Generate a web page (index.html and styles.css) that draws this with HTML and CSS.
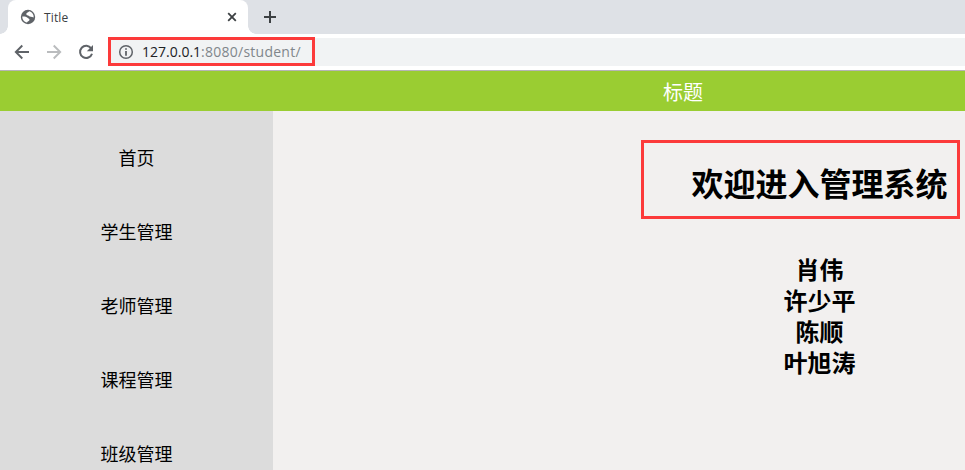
FILE: index.html
```html
<!DOCTYPE html>
<html lang="zh">
<head>
  <meta charset="UTF-8">
  <title>Title</title>
  <link rel="stylesheet" href="styles.css">
</head>
<body>
  <div class="tabs">
    <div class="tab">
      <svg width="16" height="16" viewBox="0 0 16 16">
        <circle cx="8" cy="8" r="7.2" fill="#5f6368"/>
        <path d="M9.2 2.3C8.4 3.6 6.6 3.6 6.3 4.8C6 6.4 8.2 6.2 9 7.1C9.6 8.3 11.6 7.6 13.7 8.4C13.9 5.4 12 3 9.2 2.3Z" fill="#fff"/>
        <path d="M2.3 7.6C4 7.4 6.6 7.7 7.5 8.8C8.2 9.8 9.8 9.6 9.5 11C9.1 12.2 7.4 12 7 13.6C4.2 13.2 2.2 10.6 2.3 7.6Z" fill="#fff"/>
      </svg>
      <span class="tab-title">Title</span>
      <svg width="10" height="10" viewBox="0 0 10 10"><path d="M1.2 1.2L8.8 8.8M8.8 1.2L1.2 8.8" stroke="#3c4043" stroke-width="1.8"/></svg>
    </div>
    <svg class="plus" width="14" height="14" viewBox="0 0 14 14"><path d="M7 1V13M1 7H13" stroke="#3c4043" stroke-width="2"/></svg>
  </div>
  <div class="toolbar">
    <svg width="16" height="16" viewBox="0 0 16 16" fill="none" stroke="#5f6368" stroke-width="1.9"><path d="M15 8H2.5M8.3 1.5L1.8 8L8.3 14.5"/></svg>
    <svg width="16" height="16" viewBox="0 0 16 16" fill="none" stroke="#babcbe" stroke-width="1.9"><path d="M1 8H13.5M7.7 1.5L14.2 8L7.7 14.5"/></svg>
    <svg width="16" height="16" viewBox="0 0 16 16"><path d="M13.2 4.4A6.1 6.1 0 1 0 14 9.7" fill="none" stroke="#5f6368" stroke-width="2"/><path d="M15 1V7.2H8.8Z" fill="#5f6368"/></svg>
    <div class="address">
      <svg width="16" height="16" viewBox="0 0 16 16"><circle cx="8" cy="8" r="6.3" fill="none" stroke="#5f6368" stroke-width="1.5"/><path d="M8 4.2V5.8M8 7.1V11.8" stroke="#5f6368" stroke-width="1.8"/></svg>
      <span class="url"><span class="host">127.0.0.1</span>:8080/student/</span>
      <div class="mark mark-url"></div>
    </div>
  </div>
  <div class="view">
    <div class="page">
      <div class="header">标题</div>
      <div class="main">
        <div class="menu">
          <div class="item">首页</div>
          <div class="item">学生管理</div>
          <div class="item">老师管理</div>
          <div class="item">课程管理</div>
          <div class="item">班级管理</div>
        </div>
        <div class="content">
          <h1>欢迎进入管理系统</h1>
          <h2>肖伟<br>许少平<br>陈顺<br>叶旭涛</h2>
          <div class="mark mark-welcome"></div>
        </div>
      </div>
    </div>
  </div>
</body>
</html>
```

FILE: styles.css
```css
* {
  box-sizing: border-box;
}
body {
  margin: 0;
  height: 470px;
  overflow: hidden;
  font-family: "Noto Sans CJK SC", sans-serif;
  color: #000;
}
svg {
  display: block;
  flex: none;
}
.tabs {
  display: flex;
  align-items: center;
  height: 34px;
  padding-left: 8px;
  background: #dee1e6;
}
.tab {
  position: relative;
  display: flex;
  align-items: center;
  width: 240px;
  height: 34px;
  padding: 0 11px 0 12px;
  background: #fff;
  border-radius: 8px 8px 0 0;
}
/* curved feet of the tab */
.tab::before,
.tab::after {
  content: "";
  position: absolute;
  bottom: 0;
  width: 8px;
  height: 8px;
}
.tab::before {
  left: -8px;
  background: radial-gradient(circle at 0 0, #dee1e6 7.5px, #fff 8px);
}
.tab::after {
  right: -8px;
  background: radial-gradient(circle at 100% 0, #dee1e6 7.5px, #fff 8px);
}
.tab-title {
  flex: 1;
  margin-left: 8px;
  font: 12px "Open Sans", sans-serif;
  letter-spacing: 0.15px;
  color: #3c4043;
}
.plus {
  margin-left: 15px;
}
.toolbar {
  display: flex;
  align-items: center;
  gap: 16px;
  height: 37px;
  padding-left: 14px;
  background: #fff;
  border-bottom: 1px solid #b6b4b6;
}
.address {
  position: relative;
  display: flex;
  align-items: center;
  flex: 1;
  height: 28px;
  margin-left: -2px;
  padding-left: 10px;
  background: #f1f3f4;
  border-radius: 4px 0 0 4px;
}
.url {
  margin-left: 8px;
  font: 14px/28px "Open Sans", sans-serif;
  letter-spacing: 0.25px;
  color: #80868b;
  white-space: nowrap;
}
.host {
  letter-spacing: 0;
  color: #202124;
}
.mark {
  position: absolute;
  border: 3px solid #fc3a3a;
}
.mark-url {
  left: 0;
  top: -1px;
  width: 207px;
  height: 29px;
}
.view {
  overflow: hidden;
}
/* full page width, cut off by the window */
.page {
  width: 1366px;
}
.header {
  height: 40px;
  line-height: 42px;
  background: #9acd32;
  color: #fff;
  font-size: 20px;
  text-align: center;
}
.main {
  display: flex;
  height: 359px;
}
.menu {
  width: 273px;
  padding-top: 9px;
  background: #dcdcdc;
  overflow: hidden;
}
.item {
  height: 74px;
  line-height: 74px;
  font-size: 18px;
  text-align: center;
}
.content {
  position: relative;
  flex: 1;
  background: #f2f0ef;
  text-align: center;
}
h1 {
  margin: 0;
  padding-top: 50px;
  font-size: 32px;
  line-height: 42px;
}
h2 {
  margin: 50px 0 0;
  font-size: 24px;
  line-height: 31px;
}
.mark-welcome {
  left: 368px;
  top: 29px;
  width: 319px;
  height: 79px;
}
```
